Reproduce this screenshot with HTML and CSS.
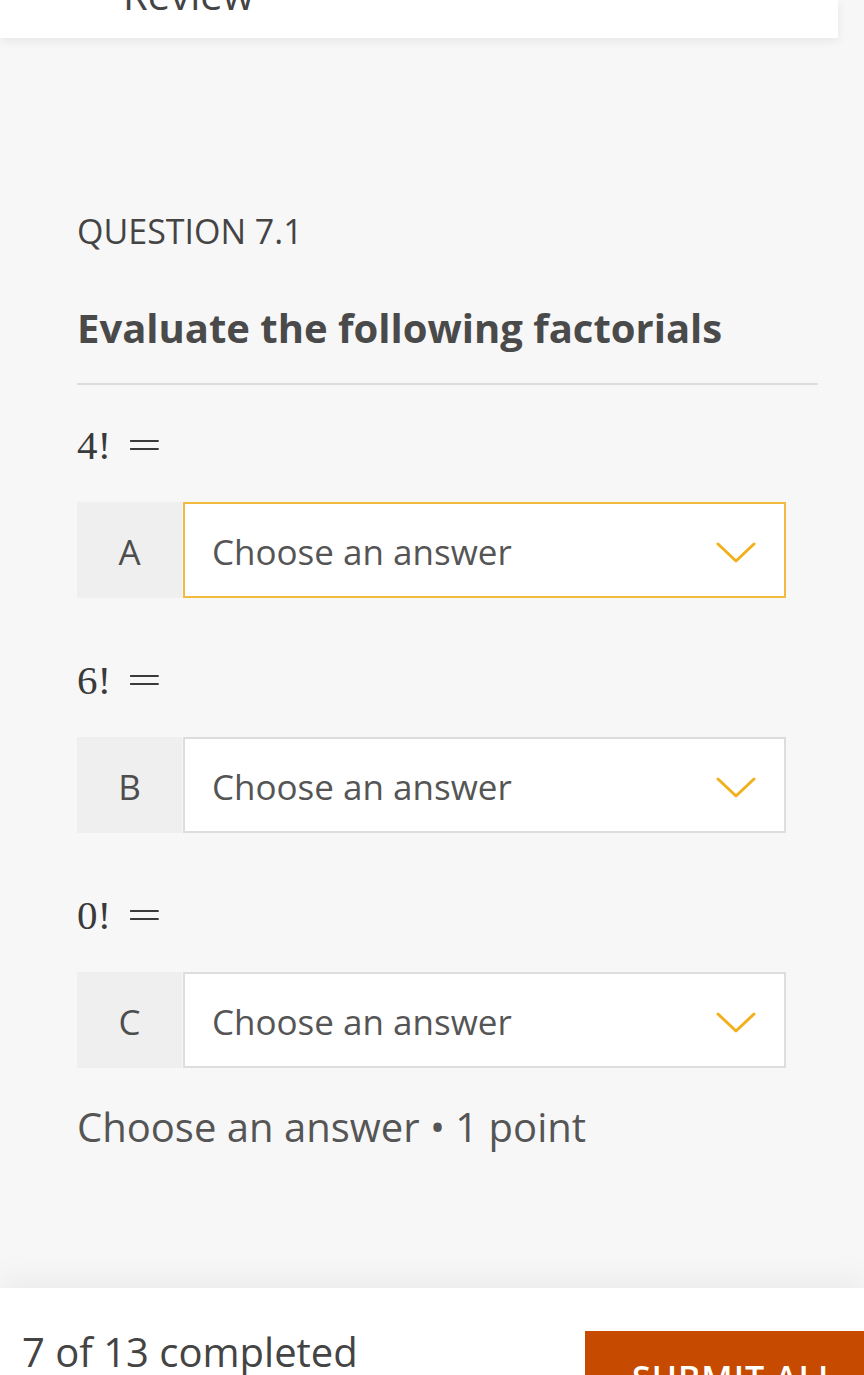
FILE: index.html
```html
<!DOCTYPE html>
<html lang="en">
<head>
<meta charset="utf-8">
<title>Question 7.1</title>
<link rel="stylesheet" href="styles.css">
</head>
<body>
<header class="topbar">
  <div class="topbar-title">Review</div>
</header>

<main class="main">
  <div class="qnum">QUESTION 7.1</div>
  <h1 class="prompt">Evaluate the following factorials</h1>
  <div class="rule"></div>

  <div class="math"><span class="m-num">4!</span><span class="m-eq">=</span></div>
  <div class="row">
    <div class="row-label">A</div>
    <div class="select select-active">
      <span class="select-text">Choose an answer</span>
      <svg class="chev" width="40" height="22" viewBox="0 0 40 22"><polyline points="2,2 20,19 38,2" fill="none" stroke="#f2b01e" stroke-width="3" stroke-linecap="round" stroke-linejoin="round"/></svg>
    </div>
  </div>

  <div class="math"><span class="m-num">6!</span><span class="m-eq">=</span></div>
  <div class="row">
    <div class="row-label">B</div>
    <div class="select">
      <span class="select-text">Choose an answer</span>
      <svg class="chev" width="40" height="22" viewBox="0 0 40 22"><polyline points="2,2 20,19 38,2" fill="none" stroke="#f2b01e" stroke-width="3" stroke-linecap="round" stroke-linejoin="round"/></svg>
    </div>
  </div>

  <div class="math"><span class="m-num">0!</span><span class="m-eq">=</span></div>
  <div class="row">
    <div class="row-label">C</div>
    <div class="select">
      <span class="select-text">Choose an answer</span>
      <svg class="chev" width="40" height="22" viewBox="0 0 40 22"><polyline points="2,2 20,19 38,2" fill="none" stroke="#f2b01e" stroke-width="3" stroke-linecap="round" stroke-linejoin="round"/></svg>
    </div>
  </div>

  <div class="feedback">Choose an answer • 1 point</div>
</main>

<footer class="footer">
  <div class="progress">7 of 13 completed</div>
  <div class="submit" role="button">SUBMIT ALL</div>
</footer>
</body>
</html>
```

FILE: styles.css
```css
html, body {
  margin: 0;
  padding: 0;
}
body {
  background: #f7f7f7;
  font-family: "Open Sans", "Noto Sans", sans-serif;
  color: #4d4d4d;
  overflow: hidden;
  width: 864px;
  height: 1375px;
}
.topbar {
  width: 838px;
  height: 38px;
  background: #ffffff;
  box-shadow: 0 3px 10px rgba(0, 0, 0, 0.07);
  overflow: hidden;
}
.topbar-title {
  margin: -32px 0 0 123px;
  font-size: 40px;
  line-height: 54px;
  color: #444;
}
.main {
  padding: 170px 46px 134px 77px;
}
.qnum {
  font-size: 34px;
  line-height: 46px;
  color: #444;
}
.prompt {
  margin: 47px 0 0;
  font-size: 40px;
  line-height: 54px;
  font-weight: 700;
  color: #4a4a4a;
}
.rule {
  margin-top: 28px;
  height: 2px;
  background: #dcdcdc;
}
.math {
  margin-top: 59px;
  font-family: "Liberation Serif", "Times New Roman", serif;
  font-size: 41px;
  line-height: 46px;
  height: 46px;
  color: #3a3a3a;
  display: flex;
  align-items: baseline;
}
.rule + .math {
  margin-top: 37px;
}
.m-eq {
  display: inline-block;
  margin-left: 16px;
  transform: scaleX(1.5);
  transform-origin: left center;
}
.row {
  margin-top: 34px;
  width: 709px;
  height: 96px;
  display: flex;
}
.row-label {
  width: 105px;
  flex-shrink: 0;
  background: #efefef;
  display: flex;
  align-items: center;
  justify-content: center;
  padding-top: 2px;
  box-sizing: border-box;
  font-size: 35px;
  color: #4d4d4d;
}
.select {
  flex: 1;
  margin-left: 1px;
  background: #ffffff;
  border: 2px solid #dddddd;
  display: flex;
  align-items: center;
  justify-content: space-between;
  padding: 2px 28px 0 27px;
}
.select-active {
  border-color: #f3bb3d;
}
.select-text {
  font-size: 35px;
  color: #555;
}
.chev {
  display: block;
  margin-top: 4px;
}
.feedback {
  margin-top: 32px;
  font-size: 40px;
  line-height: 54px;
  color: #555;
}
.footer {
  background: #ffffff;
  height: 200px;
  display: flex;
  justify-content: space-between;
  align-items: flex-start;
  box-shadow: 0 -10px 30px rgba(0, 0, 0, 0.05);
  padding-left: 22px;
}
.progress {
  margin-top: 37px;
  font-size: 40px;
  line-height: 54px;
  color: #444;
}
.submit {
  margin-top: 43px;
  flex-shrink: 0;
  width: 279px;
  height: 90px;
  background: #c64b00;
  color: #ffffff;
  font-size: 34px;
  line-height: 46px;
  font-weight: 600;
  letter-spacing: 1px;
  padding: 24px 0 0 47px;
  white-space: nowrap;
  overflow: hidden;
  box-sizing: border-box;
}
```
